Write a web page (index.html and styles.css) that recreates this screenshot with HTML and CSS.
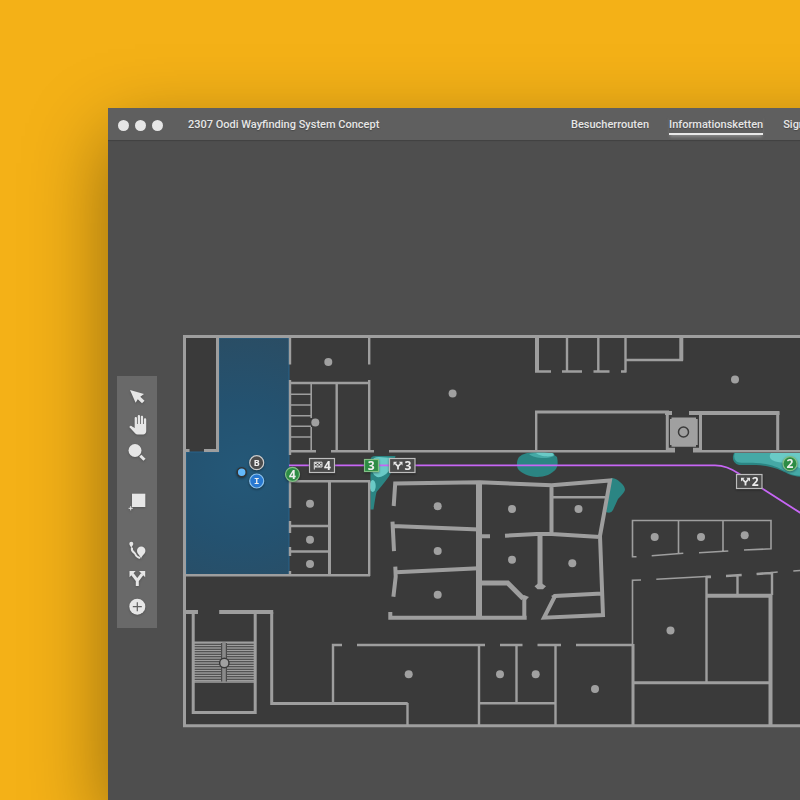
FILE: index.html
```html
<!DOCTYPE html>
<html lang="de">
<head>
<meta charset="utf-8">
<meta name="viewport" content="width=device-width, initial-scale=1">
<title>2307 Oodi Wayfinding System Concept</title>
<link rel="stylesheet" href="styles.css">
</head>
<body>
<div class="window">
  <header class="titlebar">
    <div class="dots"><span></span><span></span><span></span></div>
    <h1 class="title">2307 Oodi Wayfinding System Concept</h1>
    <nav class="tabs">
      <a href="#routen">Besucherrouten</a>
      <a href="#ketten" class="active" aria-current="page">Informationsketten</a>
      <a href="#sign">Sign</a>
    </nav>
  </header>
  <main class="workspace">
    <div class="toolbar" role="toolbar">
      <div class="tools">
        <button type="button"><svg viewBox="0 0 24 24"><path d="M5 5l14 4-3.700 2.700 4.200 4-2.500 2.600-4.200-4-2.200 3.500z"/></svg></button>
        <button type="button"><svg viewBox="0 0 24 24"><path transform="translate(3.500 2) scale(.77 .81)" d="M23 5.500V20c0 2.200-1.800 4-4 4h-7.300c-1.080 0-2.100-.43-2.850-1.190L1 14.830s1.260-1.230 1.300-1.250c.22-.19.49-.29.79-.29.22 0 .42.06.6.16.04.01 4.310 2.460 4.310 2.460V4c0-.83.67-1.500 1.500-1.500S11 3.170 11 4v7h1V1.500c0-.83.67-1.500 1.500-1.500S15 .67 15 1.500V11h1V2.500c0-.83.67-1.500 1.500-1.500s1.500.67 1.500 1.500V11h1V5.500c0-.83.67-1.500 1.500-1.500s1.500.67 1.500 1.500z"/></svg></button>
        <button type="button"><svg viewBox="0 0 24 24"><circle cx="10" cy="9.500" r="6.500"/><path class="line" d="M15.300 14.700l4.200 4.100"/></svg></button>
      </div>
      <div class="tools">
        <button type="button"><svg viewBox="0 0 24 24"><path d="M7 3.700h13.300v13.300H7z"/><path class="hair" d="M5.700 16.200v4.200M3.600 18.300h4.200"/></svg></button>
      </div>
      <div class="tools">
        <button type="button"><svg viewBox="0 0 24 24"><path d="M6.300 9C5.700 7 4.300 6.300 4.300 4.700a2 2 0 0 1 4 0C8.300 6.300 6.900 7 6.300 9z"/><path class="curve" d="M7 8.500c-1 3 .5 4 2.500 5.500s0 3.500 5.500 5"/><path d="M16 20c-.5-3.500-4-5-4-8.300a4.200 4.200 0 0 1 8.400 0C20.400 15 16.500 16.500 16 20z"/></svg></button>
        <button type="button"><svg viewBox="0 0 24 24"><path class="fork" d="M12.300 19v-5.500L7.300 7M12.300 13.500l5-6.500"/><path d="M4.500 4h6.200L4.500 10.200zM20.200 4H14l6.200 6.200z"/></svg></button>
        <button type="button"><svg viewBox="0 0 24 24"><circle cx="12.300" cy="11.700" r="8"/><path class="cut" d="M12.300 7.200v9M7.800 11.700h9"/></svg></button>
      </div>
    </div>
    <svg class="plan" viewBox="183 335 700 393">
      <defs>
        <radialGradient id="zone" gradientUnits="userSpaceOnUse" cx="242" cy="472" r="140">
          <stop offset="0" stop-color="#245878"/><stop offset=".5" stop-color="#245270"/><stop offset="1" stop-color="#2a4d64"/>
        </radialGradient>
        <g id="split"><path class="glyph-line" d="M4.500 8.500V5.500L1.800 2.500M4.500 5.500L7.200 2.500"/><path class="glyph" d="M0 .7h3.700L0 4.400zM9 .7H5.300L9 4.400z"/></g>
      </defs>
      <path class="floor" d="M184.500 336.500H900V725.700H184.500z"/>
      <path class="zone" fill="url(#zone)" d="M219 338h70v236.500H186V452h33z"/>

      <g class="teal">
        <path class="deep" d="M370.500 460q0-4 5-4h20l-4.500 17q-4 7-14.500 19-1 4-3 17.500h-3z"/>
        <path class="light" d="M372 461q1-4 7-4l15 1-5 13q-6 7-12 6-7-3-5-16z"/>
        <ellipse class="light" cx="372.700" cy="486" rx="3" ry="6"/>
        <path class="deep" d="M519 457q5-5 19-5t19 5c1 5 1 9-1 12-4 5-11 8-19 8s-16-4-19-8c-2-4-1-9 1-12z"/>
        <path class="mid" d="M529 454q8-2 24-1 2 1 1 3c-5 3-20 3-25-2z"/>
        <path class="light" d="M536 453h16q3 2 0 3c-5 1-13 0-16-3z"/>
        <path class="deep" d="M611 478q5 0 9 4 5 4 5 8-1 3-7 9l-5 11q-2 4-7 2z"/>
        <path class="deep" d="M734 453h70v24c-20 0-18-10-48-12h-17q-7-2-6-9z"/>
        <path class="mid" d="M735 453h69v23c-22 0-18-11-48-13-8-1-17 1-20-2q-3-4-1-8z"/>
        <path class="light" d="M771 453h32v18c-8-9-24-7-31-11q-4-3-1-7z"/>
      </g>

      <!-- outer walls and long corridor walls -->
      <path class="wall w3" d="M184.500 336.500H900M184.500 335V727M183 725.700H900"/>
      <path class="wall w3" d="M217.500 337V452M186 450.500h3.500M204 450.500h15"/>
      <path class="wall w2" d="M290 338v26.500M290 380v75M290 480.500V508M290 521v12M290 547v9M290 571v5M369.200 338v26.500M369.200 380v72M289 383h81M336.700 383v69M289 451.300h27M331 451.300h43M389 451.300h286M693 451.300h200"/>
      <path class="wall w1" d="M311.200 383v35M311.200 427v24M290 394.300h21M290 405h21M290 415.700h21M290 426.300h21M290 437h21"/>
      <path class="wall w2" d="M289 481.200h81.200M369.200 481v95M184 575.300h186M290 526h39M290 551.500h39"/>
      <path class="wall w3" d="M329.500 482v93"/>

      <!-- upper rooms -->
      <path class="wall w4" d="M537 338v34M681.300 338v22.500M689 413h90.500M665 413h7M667 449.700h8M693 449.700h8"/>
      <path class="wall w2" d="M567 338v34M598.300 338v34M625.500 338v34M535 371.500h16M562 371.500h20M593.500 371.500h16M621 371.500h5.500M625 360h58M536.200 411v41"/>
      <path class="wall w3" d="M535 412h134M667.300 412v40M700.500 412v40M777.700 412v40"/>
      <path class="cab" d="M671.500 417.500h24.500v1.500h1.700v26h-1.700v1.700h-24.500v-1.700h-1.500v-26h1.500z"/>
      <circle class="ring" cx="683.500" cy="432" r="5"/>

      <!-- central block -->
      <path class="wall w4" d="M393.700 506l1.500-22.500L480 482.300l71.700 2.900L610 480.500 600 536l3 79-59 2.700 11-21.700 47-2.500M392.500 521.700l1.500 29.500M392.700 526l86.300 3.500M395.300 566.700l.4 10-2.300 20M396 572.300l83-4M390.300 612v5.700h136.400M524.300 597v20M551.500 485v49M481 536.300h9M505 535.700l31.700-1.700h15l48.300 3"/>
      <path class="wall w6" d="M479 481v138"/>
      <path class="wall w5" d="M480 583h27.700l15.500 15.500M540 534v52"/>
      <path class="wall w2" d="M553 497.300h52"/>
      <path class="knob" d="M534.500 586.300l3.500-2.800h4l4 2.800-3 3h-5.500zM520 597l4-2 5 2-3 3zM551 596l4-2 3 2-3 3z"/>

      <!-- lower left -->
      <path class="wall w4" d="M184 612h14M219.200 612h54"/>
      <path class="wall w3" d="M271.700 612v91.500h136M193.200 612v100.500h62V612"/>
      <path class="wall w2" d="M407.500 703v22M333 704v-59h9M357 645h128M500 645h22.500M537.500 645H561M576 645h57M479 645v80M516.500 645v58.300M555.500 645v80M479 703.300h76.500"/>
      <path class="stairs" d="M194 643h61M194 645.500h61M194 648h61M194 650.500h61M194 653h61M194 655.500h61M194 658h61M194 660.500h61M194 663h61M194 665.500h61M194 668h61M194 670.500h61M194 673h61M194 675.500h61M194 678h61M194 680.500h61"/>
      <path class="wall w1" d="M193 642.300h62M193 682h62"/>
      <path class="rail-gap" d="M224 643v38.500"/>
      <path class="rail" d="M224 642v40.500"/>
      <circle class="landing" cx="224.300" cy="663" r="4.700"/>

      <!-- lower right -->
      <path class="wall w1" d="M636.500 556.700h-4v-36.200h138.500v28.300l-27 1.200M678.500 520.500v33M723 520.500v31M651.700 555.700l31.600-2.400M699 552.700l29.300-1.700M641 580l-8.500.3V645M656.300 579.300l54.400-3M756.700 574l21-2M793.300 571l14-1"/>
      <path class="wall w2" d="M706.500 576.500v106M737.500 575v20M772 573v22M706 577h5M726 576l15.700-1M756.700 574l16-1"/>
      <path class="wall w3" d="M633 644v81M633 682.700h137"/>
      <path class="wall w4" d="M706 595.700h66.500M770.500 595v130"/>

      <g class="rooms">
        <circle cx="328.300" cy="362" r="4"/><circle cx="315.300" cy="422.500" r="4"/><circle cx="452.600" cy="393.600" r="4"/><circle cx="735" cy="379.500" r="4"/>
        <circle cx="310" cy="503.700" r="4"/><circle cx="310" cy="539.700" r="4"/><circle cx="310" cy="564" r="4"/>
        <circle cx="437.700" cy="506.300" r="4"/><circle cx="437.700" cy="551" r="4"/><circle cx="437.700" cy="594.700" r="4"/>
        <circle cx="512" cy="509" r="4"/><circle cx="578.500" cy="509" r="4"/><circle cx="512" cy="559.700" r="4"/><circle cx="572.300" cy="563.300" r="4"/>
        <circle cx="408.700" cy="674.300" r="4"/><circle cx="500" cy="674.300" r="4"/><circle cx="535.700" cy="674.300" r="4"/><circle cx="595" cy="689" r="4"/>
        <circle cx="654.700" cy="537" r="4"/><circle cx="701" cy="537" r="4"/><circle cx="744.700" cy="535.300" r="4"/><circle cx="670.500" cy="630.500" r="4"/>
      </g>

      <path class="route" d="M289 465.300H715q12 0 24 8.500L763 489l50 32"/>

      <g class="marks">
        <circle class="here" cx="241.700" cy="472.300" r="4.500"/>
        <circle class="pin grey" cx="256.700" cy="462.700" r="7"/><text class="small" x="256.700" y="466">B</text>
        <circle class="pin blue" cx="256.700" cy="481" r="7"/><text class="small serifed" x="256.700" y="484">I</text>
        <circle class="pin green" cx="292.500" cy="474.300" r="7"/><text x="292.500" y="478.700">4</text>
        <rect class="tag" x="309.500" y="458.500" width="25" height="14"/>
        <path class="flag" d="M314.300 462v7.500M314.300 462.200h7.700v4.800h-7.700"/>
        <path class="check" d="M315 462.500h1.700v1.500h-1.700zM318.400 462.500h1.700v1.500h-1.700zM316.700 464h1.700v1.500h-1.700zM320.100 464h1.700v1.500h-1.700zM315 465.500h1.700v1.500h-1.700zM318.400 465.500h1.700v1.500h-1.700z"/>
        <text x="327.500" y="469.700">4</text>
        <rect class="tag go" x="364.500" y="459.500" width="14" height="12"/><text x="371.300" y="469.700">3</text>
        <rect class="tag" x="389.500" y="458.500" width="25.500" height="14"/><use href="#split" x="393.500" y="461"/><text x="408" y="469.700">3</text>
        <rect class="tag" x="736.500" y="474.500" width="25.500" height="14"/><use href="#split" x="741" y="477"/><text x="755.300" y="485.700">2</text>
        <circle class="pin green" cx="790" cy="463.700" r="7"/><text x="790" y="468">2</text>
      </g>
    </svg>
  </main>
</div>
</body>
</html>
```
FILE: styles.css
```css
* { box-sizing: border-box; }

body {
  margin: 0;
  min-height: 100vh;
  padding: 108px 0 0 108px;
  display: flex;
  overflow: hidden;
  background: #f4b117;
  font-family: "Noto Sans", "Open Sans", sans-serif;
  color: #e6e6e6;
}

.window {
  flex: 1;
  min-width: 0;
  display: flex;
  flex-direction: column;
  margin-right: -120px;
  overflow: hidden;
  background: #4e4e4e;
  box-shadow: 0 28px 76px rgba(0, 0, 0, 0.4);
}

.titlebar {
  display: flex;
  align-items: center;
  height: 32px;
  padding: 2px 0 0 10px;
  background: #5f5f5f;
  box-shadow: 0 1px 1px rgba(0, 0, 0, 0.15);
  font-family: Roboto, "Noto Sans", sans-serif;
  font-size: 11px;
  line-height: 16px;
  white-space: nowrap;
}

.dots { display: flex; gap: 6px; width: 70px; }
.dots span { width: 11px; height: 11px; border-radius: 50%; background: #e6e6e6; }

.title { width: 383px; margin: 0; font: inherit; font-weight: 500; text-shadow: 0 1px 1px #3338; }

.tabs { display: flex; gap: 20px; }
.tabs a {
  padding: 2px 0 0;
  border-bottom: 2px solid transparent;
  color: inherit;
  font-weight: 500;
  text-decoration: none;
  text-shadow: 0 1px 1px #3338;
}
.tabs .active { border-color: #e8e8e8; box-shadow: 0 3px 3px -1px #aaa8; }

.workspace {
  flex: 1;
  display: flex;
  align-items: flex-start;
  gap: 26px;
  padding: 195px 0 72px 9px;
}

.toolbar {
  display: flex;
  flex-direction: column;
  gap: 21px;
  width: 40px;
  margin-top: 41px;
  padding: 7px 0;
  background: #696969;
}

.tools { display: flex; flex-direction: column; }

button {
  display: flex;
  align-items: center;
  justify-content: center;
  height: 28px;
  padding: 0;
  border: 0;
  background: none;
}

button svg {
  width: 24px;
  height: 24px;
  fill: #e6e6e6;
  filter: drop-shadow(0 1px 1px #3336);
}

button .line { stroke: #e6e6e6; stroke-width: 3; }
button .hair { stroke: #e6e6e6; stroke-width: 1; }
button .curve { fill: none; stroke: #e6e6e6; stroke-width: 2; }
button .fork { fill: none; stroke: #e6e6e6; stroke-width: 3; }
button .cut { stroke: #606060; stroke-width: 1.2; }

.plan { width: 700px; flex: none; display: block; }

.floor { fill: #3a3a3a; }
.zone { stroke: #28638a; stroke-width: 1; }
.wall { fill: none; stroke: #9e9e9e; }
.w1 { stroke-width: 1.6; }
.w2 { stroke-width: 2.4; }
.w3 { stroke-width: 3; }
.w4 { stroke-width: 4; }
.w5 { stroke-width: 5; }
.w6 { stroke-width: 6; }
.knob, .cab, .rooms { fill: #a0a0a0; }
.ring { fill: none; stroke: #3a3a3a; stroke-width: 1.5; }
.stairs { stroke: #9e9e9e; stroke-width: 1.4; }
.rail-gap { stroke: #4a4a4a; stroke-width: 6; }
.rail { stroke: #8a8a8a; stroke-width: 3.6; }
.landing { fill: #a0a0a0; stroke: #3a3a3a; stroke-width: 1.5; }

.deep { fill: #2b8583; }
.mid { fill: #45a9a6; }
.light { fill: #6acac6; }

.route { fill: none; stroke: #c766f5; stroke-width: 1.8; }

.marks { filter: drop-shadow(0 1px 1px #0006); }
.here { fill: #62b8fa; stroke: #333; stroke-width: 1.5; }
.pin { stroke: #ccc; stroke-width: 1.2; }
.grey { fill: #4c4c4c; }
.blue { fill: #2878d0; stroke: #8ec4ee; }
.green { fill: #2d8c45; stroke: #83bf86; }
.tag { fill: #4a4a4a; stroke: #bdbdbd; stroke-width: 1.2; }
.go { fill: #2d8c45; stroke: #83bf86; }
.glyph { fill: #e8e8e8; }
.glyph-line { fill: none; stroke: #e8e8e8; stroke-width: 1.8; }
.flag { fill: none; stroke: #e0e0e0; stroke-width: 1; }
.check { fill: #e0e0e0; }

text { fill: #eee; font-size: 12px; font-weight: 700; text-anchor: middle; }
.small { font-size: 9px; }
.serifed { font-family: "Liberation Mono", monospace; }
```
